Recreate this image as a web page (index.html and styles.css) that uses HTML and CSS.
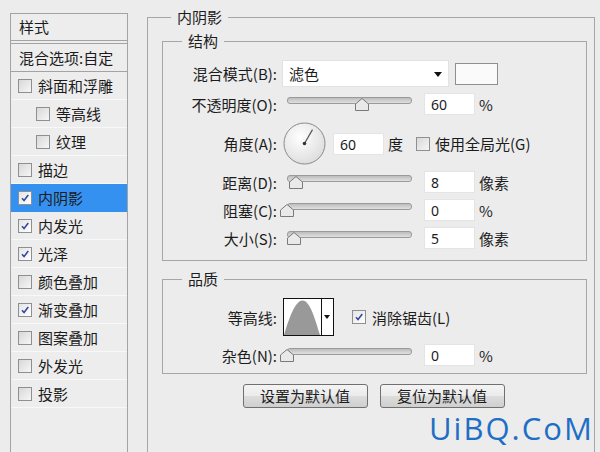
FILE: index.html
```html
<!DOCTYPE html>
<html lang="zh-CN">
<head>
  <meta charset="UTF-8">
  <title>图层样式 - 内阴影</title>
  <link rel="stylesheet" href="styles.css">
</head>
<body>
  <div class="dialog">

    <!-- Style list -->
    <div class="style-list">
      <div class="list-head">样式</div>
      <div class="list-blend">混合选项:自定</div>
      <div class="list-item"><span class="check"></span>斜面和浮雕</div>
      <div class="list-item sub"><span class="check"></span>等高线</div>
      <div class="list-item sub"><span class="check"></span>纹理</div>
      <div class="list-item"><span class="check"></span>描边</div>
      <div class="list-item selected"><span class="check on"><svg viewBox="0 0 14 14"><path d="M3.5 7.2l2.4 2.8L10.8 3.6"/></svg></span>内阴影</div>
      <div class="list-item"><span class="check on"><svg viewBox="0 0 14 14"><path d="M3.5 7.2l2.4 2.8L10.8 3.6"/></svg></span>内发光</div>
      <div class="list-item"><span class="check on"><svg viewBox="0 0 14 14"><path d="M3.5 7.2l2.4 2.8L10.8 3.6"/></svg></span>光泽</div>
      <div class="list-item"><span class="check"></span>颜色叠加</div>
      <div class="list-item"><span class="check on"><svg viewBox="0 0 14 14"><path d="M3.5 7.2l2.4 2.8L10.8 3.6"/></svg></span>渐变叠加</div>
      <div class="list-item"><span class="check"></span>图案叠加</div>
      <div class="list-item"><span class="check"></span>外发光</div>
      <div class="list-item"><span class="check"></span>投影</div>
    </div>

    <!-- Settings -->
    <fieldset class="group outer">
      <legend>内阴影</legend>

      <fieldset class="group inner structure">
        <legend>结构</legend>

        <div class="row row-blend">
          <span class="lbl">混合模式(B):</span>
          <div class="select">滤色<span class="caret"></span></div>
          <span class="swatch"></span>
        </div>

        <div class="row">
          <span class="lbl">不透明度(O):</span>
          <div class="slider"><span class="thumb" style="left: 68px"><svg viewBox="0 0 14 13"><path d="M7 0.5L13.5 6V12.5H0.5V6Z"/></svg></span></div>
          <span class="num">60</span>
          <span class="unit">%</span>
        </div>

        <div class="row row-angle">
          <span class="lbl">角度(A):</span>
          <svg class="dial" viewBox="0 0 43 43">
            <defs>
              <radialGradient id="dialFill" cx="0.4" cy="0.35" r="0.7">
                <stop offset="0" stop-color="#ffffff"/>
                <stop offset="1" stop-color="#dcdcdc"/>
              </radialGradient>
            </defs>
            <circle cx="21.5" cy="21.5" r="20.5" fill="url(#dialFill)" stroke="#8a8a8a"/>
            <line x1="21.5" y1="21.5" x2="29.5" y2="7.6" stroke="#555" stroke-width="1.2"/>
            <circle cx="21.5" cy="21.5" r="1.8" fill="#333"/>
          </svg>
          <span class="num angle-num">60</span>
          <span class="unit">度</span>
          <span class="check global"></span>
          <span class="opt">使用全局光(G)</span>
        </div>

        <div class="row">
          <span class="lbl">距离(D):</span>
          <div class="slider"><span class="thumb" style="left: 2px"><svg viewBox="0 0 14 13"><path d="M7 0.5L13.5 6V12.5H0.5V6Z"/></svg></span></div>
          <span class="num">8</span>
          <span class="unit">像素</span>
        </div>

        <div class="row">
          <span class="lbl">阻塞(C):</span>
          <div class="slider"><span class="thumb" style="left: -7px"><svg viewBox="0 0 14 13"><path d="M7 0.5L13.5 6V12.5H0.5V6Z"/></svg></span></div>
          <span class="num">0</span>
          <span class="unit">%</span>
        </div>

        <div class="row">
          <span class="lbl">大小(S):</span>
          <div class="slider"><span class="thumb" style="left: 0px"><svg viewBox="0 0 14 13"><path d="M7 0.5L13.5 6V12.5H0.5V6Z"/></svg></span></div>
          <span class="num">5</span>
          <span class="unit">像素</span>
        </div>
      </fieldset>

      <fieldset class="group inner quality">
        <legend>品质</legend>

        <div class="row row-contour">
          <span class="lbl">等高线:</span>
          <div class="contour">
            <svg class="curve" viewBox="0 0 37 36"><path d="M0 36C5 20 11 1.5 18.5 1.5C26 1.5 31 20 36 36Z"/></svg>
            <span class="contour-drop"><span class="caret small"></span></span>
          </div>
          <span class="check on aa"><svg viewBox="0 0 14 14"><path d="M3.5 7.2l2.4 2.8L10.8 3.6"/></svg></span>
          <span class="opt">消除锯齿(L)</span>
        </div>

        <div class="row">
          <span class="lbl">杂色(N):</span>
          <div class="slider"><span class="thumb" style="left: -7px"><svg viewBox="0 0 14 13"><path d="M7 0.5L13.5 6V12.5H0.5V6Z"/></svg></span></div>
          <span class="num">0</span>
          <span class="unit">%</span>
        </div>
      </fieldset>

      <div class="buttons">
        <button type="button">设置为默认值</button>
        <button type="button">复位为默认值</button>
      </div>
    </fieldset>

    <div class="watermark">UiBQ.CoM</div>
  </div>
</body>
</html>
```

FILE: styles.css
```css
* {
  box-sizing: border-box;
}
html, body {
  margin: 0;
  padding: 0;
  background-color: #ececec;
}
body {
  font-family: "Noto Sans CJK SC", "Noto Sans", sans-serif;
  font-size: 15px;
  color: #1c1c1c;
  overflow: hidden;
}
.dialog {
  position: relative;
  display: flex;
  align-items: flex-start;
  height: 452px;
  padding-left: 10px;
}

/* style list */
.style-list {
  width: 118px;
  height: 439px;
  margin-top: 13px;
  border: 1px solid #a3a3a3;
  border-bottom: none;
  background-color: #ededed;
}
.list-head {
  height: 27px;
  line-height: 26px;
  padding-left: 8px;
  border-bottom: 1px solid #a3a3a3;
}
.list-blend {
  height: 29px;
  line-height: 27px;
  margin-top: 2px;
  padding-left: 8px;
  border-top: 1px solid #a3a3a3;
  border-bottom: 1px solid #a3a3a3;
}
.list-item {
  display: flex;
  align-items: center;
  height: 28px;
  padding-left: 7px;
  border-bottom: 1px solid #f8f8f8;
}
.list-item.sub {
  padding-left: 25px;
}
.list-item.selected {
  background-color: #3591f0;
  border-bottom-color: #3591f0;
}
.list-item .check {
  margin-right: 6px;
}

/* checkboxes */
.check {
  display: inline-block;
  flex: none;
  width: 14px;
  height: 14px;
  border: 1px solid #8e8f8f;
  background: linear-gradient(135deg, #d8d8d8, #f6f6f6);
}
.check.on {
  background: linear-gradient(135deg, #e4e4e4, #ffffff);
}
.check svg {
  display: block;
  width: 12px;
  height: 12px;
}
.check path {
  fill: none;
  stroke: #34489e;
  stroke-width: 1.8;
}

/* group boxes */
.group {
  margin: 0;
  border: 1px solid #a6a6a6;
}
.group legend {
  height: 20px;
  line-height: 20px;
  padding: 0 6px;
}
.outer {
  width: 448px;
  height: 452px;
  margin-top: 7px;
  margin-left: 19px;
  padding: 4px 7px 0 14px;
  border-bottom: none;
}
.outer > legend {
  margin-left: 9px;
}
.inner > legend {
  margin-left: 19px;
}
.structure {
  padding: 9px 0 11px 0;
}
.quality {
  margin-top: 8px;
  padding: 9px 0 7px 0;
}

/* rows */
.row {
  display: flex;
  align-items: center;
  height: 22px;
  margin-top: 6px;
}
.row:first-of-type {
  margin-top: 0;
}
.row-blend {
  height: 27px;
}
.row-blend + .row {
  margin-top: 6px;
}
.row-angle {
  height: 43px;
  margin-top: 7px;
  margin-bottom: 1px;
}
.row-contour {
  height: 38px;
}
.row-contour + .row {
  margin-top: 8px;
}
.lbl {
  width: 114px;
  flex: none;
  text-align: right;
  white-space: nowrap;
}

.select {
  position: relative;
  width: 167px;
  height: 27px;
  margin-left: 5px;
  padding-left: 6px;
  line-height: 26px;
  background-color: #fff;
  border: 1px solid #e2e2e2;
}
.caret {
  position: absolute;
  right: 6px;
  top: 11px;
  width: 0;
  height: 0;
  border-left: 4px solid transparent;
  border-right: 4px solid transparent;
  border-top: 5px solid #111;
}
.swatch {
  width: 43px;
  height: 22px;
  margin-left: 6px;
  border: 1px solid #8f8f8f;
  background-color: #fafafa;
}

.slider {
  position: relative;
  width: 125px;
  height: 22px;
  margin-left: 10px;
}
.slider::before {
  content: "";
  position: absolute;
  left: 0;
  right: 0;
  top: 4px;
  height: 5px;
  border-radius: 3px;
  border: 1px solid #9a9a9a;
  background: linear-gradient(#bdbdbd, #e0e0e0);
}
.thumb {
  position: absolute;
  top: 5px;
  width: 14px;
  height: 13px;
}
.thumb svg {
  display: block;
  width: 14px;
  height: 13px;
}
.thumb path {
  fill: #e9e9e9;
  stroke: #7a7a7a;
}

.num {
  width: 51px;
  height: 22px;
  margin-left: 12px;
  padding-left: 6px;
  font-family: "Noto Sans", sans-serif;
  font-size: 14px;
  line-height: 22px;
  background-color: #fff;
  border: 1px solid #e4e4e4;
}
.unit {
  margin-left: 4px;
}
.dial {
  width: 43px;
  height: 43px;
  margin-left: 6px;
}
.angle-num {
  margin-left: 7px;
}
.check.global {
  margin-left: 13px;
  margin-right: 5px;
}
.check.aa {
  margin-left: 18px;
  margin-right: 6px;
}

.contour {
  display: flex;
  width: 51px;
  height: 38px;
  margin-left: 6px;
  border: 1px solid #111;
  background-color: #fff;
}
.curve {
  display: block;
  width: 37px;
  height: 36px;
}
.curve path {
  fill: #999;
}
.contour-drop {
  position: relative;
  flex: 1;
  border-left: 1px solid #111;
}
.caret.small {
  right: 3px;
  top: 16px;
  border-left-width: 3px;
  border-right-width: 3px;
  border-top-width: 4px;
}

/* buttons */
.buttons {
  display: flex;
  justify-content: center;
  gap: 12px;
  margin-top: 10px;
  padding-right: 2px;
}
button {
  width: 125px;
  height: 24px;
  padding: 0;
  font-family: "Noto Sans CJK SC", sans-serif;
  font-size: 15px;
  line-height: 20px;
  color: #1c1c1c;
  border: 1px solid #707070;
  border-radius: 3px;
  background: linear-gradient(#f4f4f4, #ebebeb 50%, #dddddd 50%, #cfcfcf);
}

.watermark {
  position: absolute;
  left: 429px;
  top: 406px;
  font-family: "Open Sans", sans-serif;
  font-size: 31px;
  line-height: 44px;
  color: #1d6fc6;
  letter-spacing: 2px;
}
```
